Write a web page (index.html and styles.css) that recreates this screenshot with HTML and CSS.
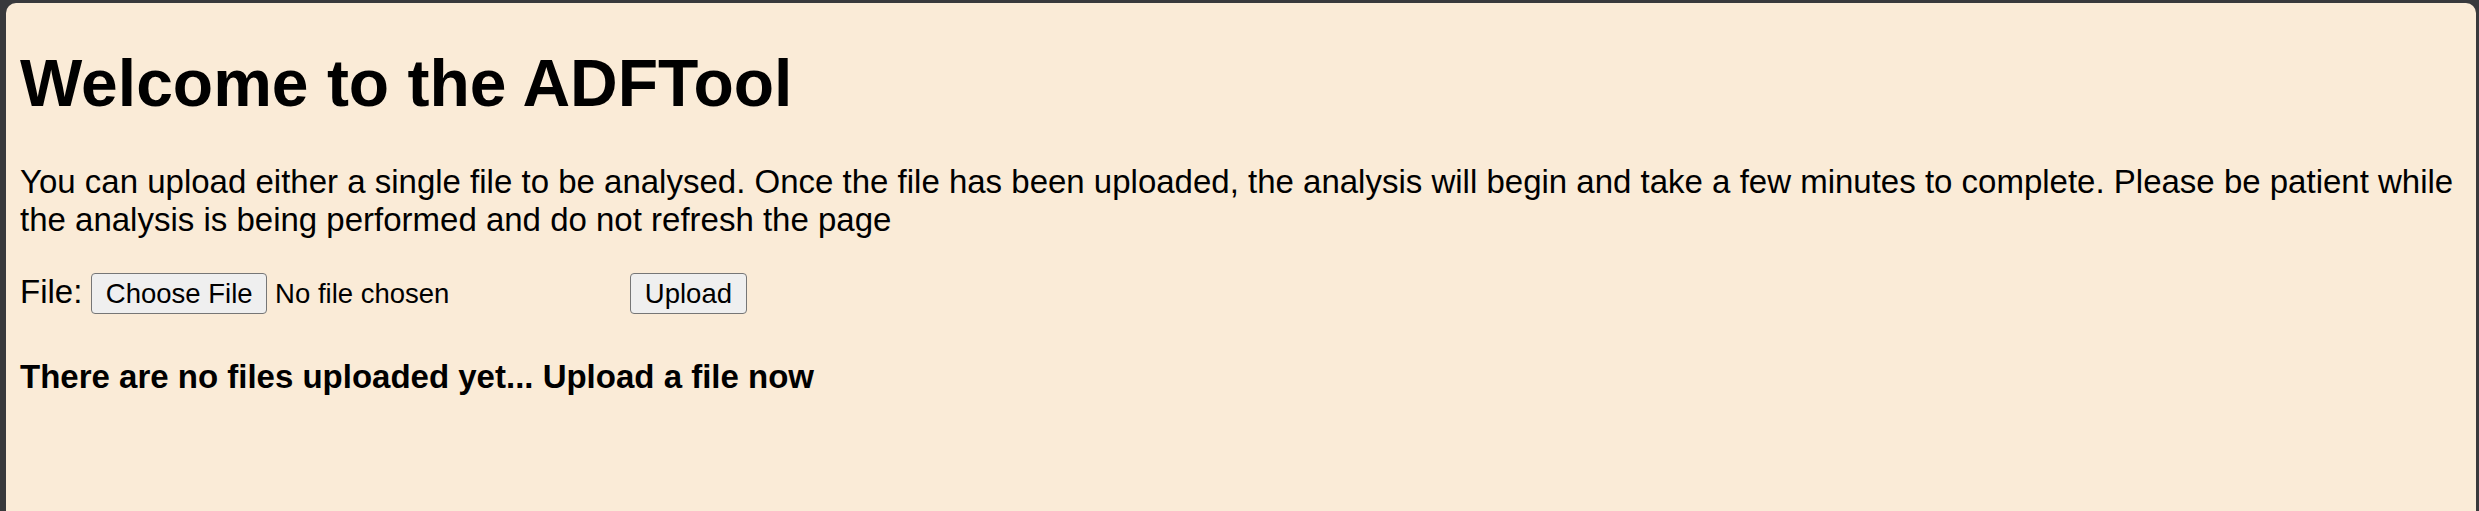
FILE: index.html
```html
<!DOCTYPE html>
<html lang="en">
<head>
<meta charset="utf-8">
<title>ADFTool</title>
<link rel="stylesheet" href="styles.css">
</head>
<body>
<div class="frame">
  <main class="panel">
    <h1 class="title">Welcome to the ADFTool</h1>
    <p class="intro">You can upload either a single file to be analysed. Once the file has been uploaded, the analysis will begin and take a few minutes to complete. Please be patient while the analysis is being performed and do not refresh the page</p>
    <form class="upload-row">
      <label class="file-label">File:</label>
      <span class="file-input">
        <button type="button" class="btn">Choose File</button>
        <span class="file-name">No file chosen</span>
      </span>
      <button type="button" class="btn">Upload</button>
    </form>
    <h4 class="empty">There are no files uploaded yet... Upload a file now</h4>
  </main>
</div>
</body>
</html>
```

FILE: styles.css
```css
html, body {
  margin: 0;
  padding: 0;
  height: 100%;
}

body {
  background: #38393c;
  font-family: "Liberation Sans", Arial, sans-serif;
  color: #000;
}

.frame {
  box-sizing: border-box;
  height: 100%;
  padding: 3px 3px 0 6px;
}

.panel {
  box-sizing: border-box;
  height: 100%;
  background: #faebd7;
  border-radius: 10px 10px 0 0;
  padding: 1px 14px 0 14px;
  overflow: hidden;
}

.title {
  font-size: 66px;
  line-height: 76px;
  font-weight: bold;
  margin: 41px 0 0 0;
}

.intro {
  font-size: 33px;
  line-height: 38px;
  margin: 42px 0 0 0;
}

.upload-row {
  display: flex;
  align-items: baseline;
  margin-top: 34px;
}

.file-label {
  font-size: 33px;
  line-height: 38px;
  margin-right: 9px;
}

.file-input {
  display: inline-flex;
  align-items: baseline;
  width: 530px;
  margin-right: 9px;
}

.btn {
  font-family: "Liberation Sans", Arial, sans-serif;
  font-size: 27.5px;
  line-height: 39px;
  height: 41px;
  padding: 0 13.5px;
  border: 1px solid #767676;
  border-radius: 4px;
  background: #efefef;
  color: #000;
  box-sizing: border-box;
}

.file-name {
  font-size: 27.5px;
  margin-left: 8px;
  white-space: nowrap;
}

.empty {
  font-size: 33px;
  line-height: 38px;
  font-weight: bold;
  margin: 44px 0 0 0;
}
```
